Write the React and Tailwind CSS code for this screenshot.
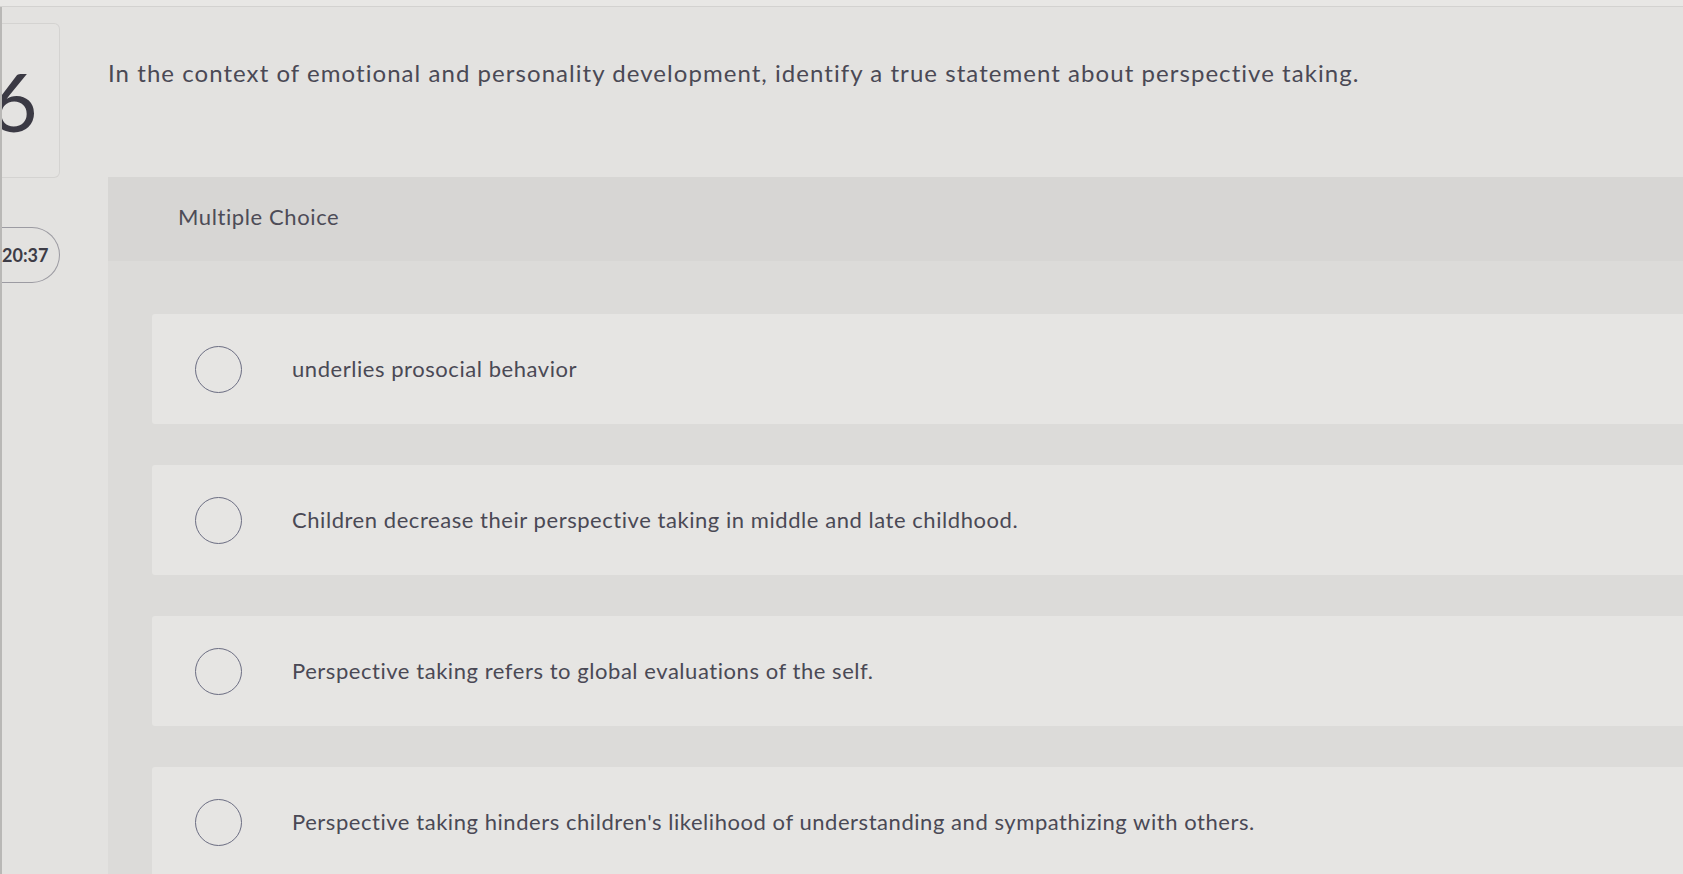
import React from "react";

const options = [
  "underlies prosocial behavior",
  "Children decrease their perspective taking in middle and late childhood.",
  "Perspective taking refers to global evaluations of the self.",
  "Perspective taking hinders children's likelihood of understanding and sympathizing with others.",
];

export default function App() {
  return (
    <div
      className="w-full h-[874px] overflow-hidden bg-[#e3e2e0] flex flex-col"
      style={{ fontFamily: "Lato, 'Open Sans', sans-serif" }}
    >
      <div className="h-[7px] shrink-0 bg-[#e8e7e5] border-b border-[#d3d2d0]" />
      <div className="flex flex-1 min-h-0">
        {/* left column */}
        <div className="w-[108px] shrink-0 flex flex-col border-l-2 border-[#b9b8b6]">
          <div className="mt-[16px] w-[58px] h-[155px] rounded-r-[6px] border border-l-0 border-[#d4d3d1] bg-[#e4e3e1] overflow-hidden flex items-center">
            <span className="-ml-[12px] mt-[-2px] text-[82px] leading-none font-normal text-[#3b3a44]">6</span>
          </div>
          <div className="mt-[49px] w-[58px] h-[56px] rounded-r-full border-[1.5px] border-l-0 border-[#9c9ba2] flex items-center">
            <span className="text-[18px] font-bold text-[#3d3c46]">20:37</span>
          </div>
        </div>
        {/* main column */}
        <div className="flex-1 min-w-0 flex flex-col">
          <div className="h-[170px] shrink-0 pt-[49px]">
            <p className="text-[24px] leading-[34px] tracking-[1.05px] text-[#4a4955] whitespace-nowrap">
              In the context of emotional and personality development, identify a true statement about perspective taking.
            </p>
          </div>
          <div className="flex-1 flex flex-col bg-[#dcdbd9]">
            <div className="h-[84px] shrink-0 bg-[#d7d6d4] pl-[70px] pt-[25px]">
              <span className="text-[22px] leading-[30px] tracking-[0.6px] text-[#4d4c57]">Multiple Choice</span>
            </div>
            <div className="pl-[44px] pt-[53px] flex flex-col gap-[41px]">
              {options.map((t) => (
                <div
                  key={t}
                  className="h-[110px] shrink-0 rounded-l-[3px] bg-[#e6e5e3] flex items-center pl-[43px]"
                >
                  <div className="w-[47px] h-[47px] shrink-0 rounded-full border-[1.5px] border-[#6b6d82]" />
                  <span className="ml-[50px] text-[22px] leading-[30px] tracking-[0.55px] text-[#4a4955] whitespace-nowrap">
                    {t}
                  </span>
                </div>
              ))}
            </div>
          </div>
        </div>
      </div>
    </div>
  );
}
